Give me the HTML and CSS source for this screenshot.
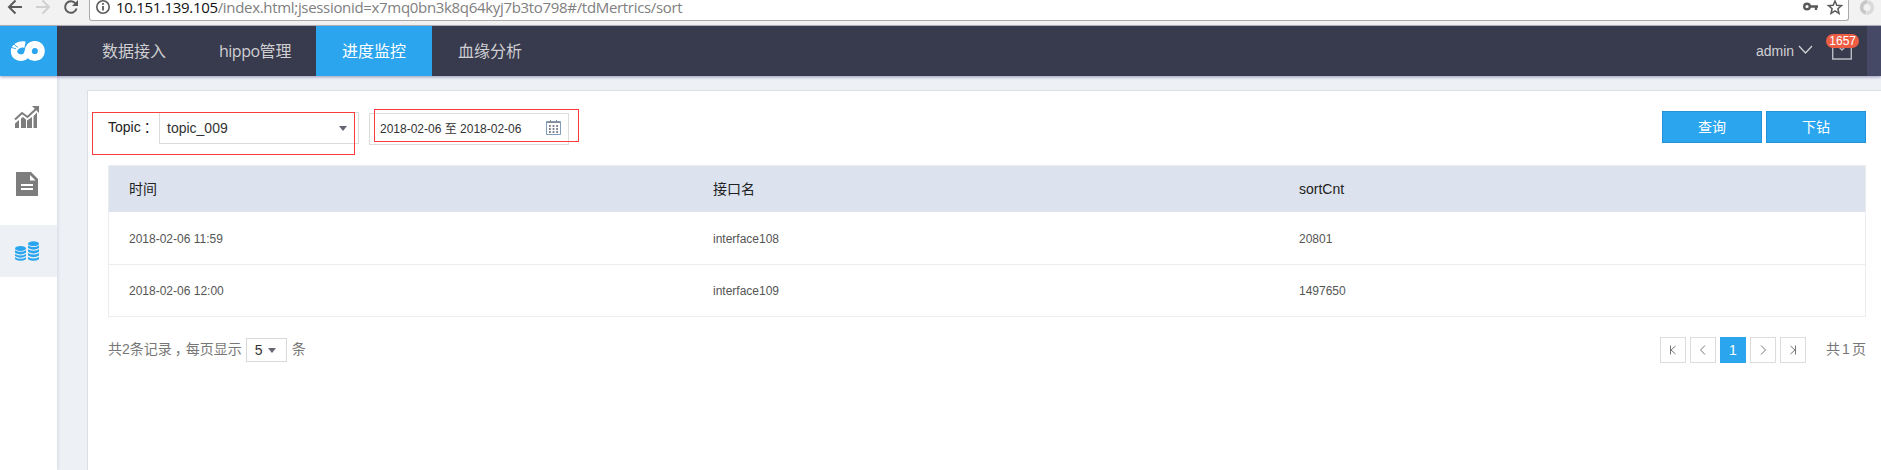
FILE: index.html
```html
<!DOCTYPE html>
<html lang="zh-CN">
<head>
<meta charset="utf-8">
<title>进度监控</title>
<link rel="stylesheet" href="styles.css">
</head>
<body>
<div class="browser">
  <div class="browser-nav">
    <svg width="89" height="25" viewBox="0 0 89 25" fill="none" stroke="#5a5a5a" stroke-width="2">
      <path d="M22 7H9.500M15.500 0.500L9 7l6.500 6.500"/>
      <path d="M36 7h12.500M42.500 0.500L49 7l-6.500 6.500" stroke="#d0d0d0"/>
      <path d="M75.500 3.500A5.800 5.800 0 1 0 76.500 8.500"/>
      <path d="M78 0v6h-6z" fill="#5a5a5a" stroke="none"/>
    </svg>
  </div>
  <div class="address">
    <svg class="info" width="16" height="16" viewBox="0 0 16 16" fill="none" stroke="#5a5a5a"><circle cx="8" cy="8" r="6.200" stroke-width="1.600"/><path d="M8 7v4.500M8 4v1.800" stroke-width="1.800"/></svg>
    <span class="url"><b>10.151.139.105</b>/index.html;jsessionid=x7mq0bn3k8q64kyj7b3to798#/tdMertrics/sort</span>
    <svg class="tools" width="42" height="20" viewBox="0 0 42 20" fill="none" stroke="#5a5a5a">
      <circle cx="5" cy="6.500" r="2.800" stroke-width="2.400"/><path d="M8 6.500h8M14 6.500v3.500" stroke-width="2.400"/>
      <path d="M33 1l1.800 4.300 4.700.4-3.600 3 1.100 4.600-4-2.500-4 2.500 1.100-4.600-3.600-3 4.700-.4z" stroke-width="1.500"/>
    </svg>
  </div>
  <svg class="ext" width="16" height="16" viewBox="0 0 16 16" fill="none" stroke-width="3.600"><path d="M7 13C1 11 1 3 8.500 1.500" stroke="#c8c8c8"/><path d="M9 2c6 2 6 10-1.500 11.500" stroke="#dadada"/></svg>
</div>
<header class="header">
  <div class="logo">
    <svg width="36" height="21" viewBox="0 0 36 21" fill="none" stroke="#fff">
      <path d="M15 3.600C9 2.500 4 6 4 10.500c0 5 6.500 8 11 5 3-2 3-8.500 6-10.500" stroke-width="6.400"/>
      <circle cx="24.800" cy="10" r="6.600" stroke-width="7"/>
      <path d="M0 6l6 1.800M3 2.500l5 4" stroke="#2ba5ee" stroke-width=".9"/>
    </svg>
  </div>
  <nav class="nav"><a>数据接入</a><a><span class="latin">hippo</span>管理</a><a class="active">进度监控</a><a>血缘分析</a></nav>
  <div class="account">
    <span>admin</span>
    <svg class="chevron" width="16" height="10" viewBox="0 0 16 10" fill="none" stroke="#d0d0d5"><path d="M1 1l6.500 7L14 1" stroke-width="1.300"/></svg>
    <div class="mail">
      <svg width="20" height="20" viewBox="0 0 20 20" fill="none" stroke="#b9bac2" stroke-width="1.400"><path d="M.7.700h18.600v18.300H.700zM5 5l5 5 5-5"/></svg>
      <span class="badge">1657</span>
    </div>
  </div>
  <div class="edge"></div>
</header>
<div class="body">
  <aside class="sidebar">
    <a><svg width="26" height="24" viewBox="0 0 26 24" fill="#7d7d7d"><path d="M1 18.500l4-3.500v8H1zM7 13.500l2-1.500 3 2.500V23H7zM13 15.500l5-3.500v11h-5zM19.500 11L23 7.500V23h-3.500z"/><path d="M1 14.500l7-6.500 5.500 4L22 4" fill="none" stroke="#7d7d7d" stroke-width="2"/><path d="M18 1h7v7z"/></svg></a>
    <a><svg width="22" height="24" viewBox="0 0 22 24"><path d="M0 0h15l7 7v17H0z" fill="#7d7d7d"/><path d="M14 3v5.500h5.500z" fill="#fff"/><path d="M5 13h12M5 17h12" stroke="#fff" stroke-width="1.800"/></svg></a>
    <a class="active"><svg width="26" height="20" viewBox="0 0 26 20" fill="#2ba5ee"><ellipse cx="6.500" cy="7.500" rx="5.500" ry="2.400"/><path d="M1 9.300q5.500 3 11 0v2.500q-5.500 3.600-11 0zM1 13q5.500 3 11 0v2q-5.500 3.600-11 0zM1 16.200q5.500 3 11 0v2q-5.500 3.300-11 0z"/><ellipse cx="19.500" cy="2.700" rx="5.500" ry="2.400"/><path d="M14 4.500q5.500 3 11 0V7q-5.500 3.600-11 0zM14 8.300q5.500 3 11 0v2.500q-5.500 3.600-11 0zM14 12.100q5.500 3 11 0v2.400q-5.500 3.600-11 0zM14 16q5.500 3 11 0v2.200q-5.500 3.300-11 0z"/></svg></a>
  </aside>
  <main class="panel">
    <div class="filters">
      <label class="label">Topic<span class="colon">：</span></label>
      <div class="select"><span>topic_009</span><i class="caret"></i></div>
      <div class="date"><span>2018-02-06 至 2018-02-06</span>
        <svg width="15" height="15" viewBox="0 0 15 15" fill="none" stroke="#70788a"><path d="M.5 1.500h14v13H.500z" stroke="#7f9cb8"/><path d="M1 2.500h13M4.500 0v3M10.500 0v3" stroke="#8a8a92"/><path d="M3 6h9M3 9h9M3 12h9" stroke="#55586a" stroke-width="1.600" stroke-dasharray="1.800 1.800"/></svg>
      </div>
      <div class="actions"><button>查询</button><button>下钻</button></div>
      <div class="mark mark-topic"></div>
      <div class="mark mark-date"></div>
    </div>
    <div class="table">
      <div class="row head"><span>时间</span><span>接口名</span><span>sortCnt</span></div>
      <div class="row"><span>2018-02-06 11:59</span><span>interface108</span><span>20801</span></div>
      <div class="row last"><span>2018-02-06 12:00</span><span>interface109</span><span>1497650</span></div>
    </div>
    <div class="footer">
      <span class="count">共2条记录<span class="comma">，</span>每页显示</span>
      <div class="size"><span>5</span><i class="caret"></i></div>
      <span class="count">条</span>
      <div class="pager">
        <a><svg width="10" height="10" viewBox="0 0 10 10"><path d="M2.500 .5v9M7.500 1L3 5l4.500 4"/></svg></a>
        <a><svg width="10" height="10" viewBox="0 0 10 10"><path d="M7 .5L2.500 5 7 9.500"/></svg></a>
        <a class="current">1</a>
        <a><svg width="10" height="10" viewBox="0 0 10 10"><path d="M3 .5L7.500 5 3 9.500"/></svg></a>
        <a><svg width="10" height="10" viewBox="0 0 10 10"><path d="M7.500 .5v9M2.500 1L7 5 2.500 9"/></svg></a>
      </div>
      <div class="total count"><span>共</span><span>1</span><span>页</span></div>
    </div>
  </main>
</div>
</body>
</html>
```
FILE: styles.css
```css
* { box-sizing: border-box; }
body {
  margin: 0;
  height: 470px;
  overflow: hidden;
  display: flex;
  flex-direction: column;
  background: #edf1f6;
  font-family: "Liberation Sans", "Noto Sans CJK SC", sans-serif;
  font-size: 14px;
  color: #333;
}
svg { display: block; flex: none; }

.browser {
  height: 26px;
  flex: none;
  display: flex;
  align-items: flex-start;
  background: #f2f2f2;
  border-bottom: 1px solid #b8b8bc;
}
.browser-nav { width: 89px; }
.address {
  width: 1760px;
  height: 21px;
  display: flex;
  background: #fff;
  border: 1px solid #a9a9a9;
  border-top: 0;
  border-radius: 0 0 3px 3px;
}
.info { margin: -1px 5px 0 5px; }
.url {
  flex: 1;
  font: 15px/15px "Open Sans", "Noto Sans", sans-serif;
  letter-spacing: -.32px;
  color: #808080;
  white-space: nowrap;
}
.url b { font-weight: 400; color: #111; }
.tools { margin-right: 4px; }
.ext { margin-left: 10px; }

.header {
  position: relative;
  height: 50px;
  flex: none;
  display: flex;
  background: #383a4d;
  box-shadow: 0 1px 3px rgba(70, 60, 130, .5);
}
.logo {
  width: 57px;
  padding: 15px 0 0 10px;
  background: #2ba5ee;
}
.nav { display: flex; margin-left: 19px; }
.nav a {
  width: 116px;
  padding-left: 26px;
  font: 16px/50px "Open Sans", "Noto Sans CJK SC", sans-serif;
  color: #cfcfd2;
  white-space: nowrap;
}
.nav a:nth-child(2) { width: 124px; padding-left: 27px; }
.latin { letter-spacing: -.5px; }
.nav .active { background: #2ba5ee; color: #fff; }
.account {
  margin-left: auto;
  display: flex;
  width: 111px;
  line-height: 51px;
  color: #d0d0d5;
}
.chevron { margin: 19px 0 0 4px; }
.mail { position: relative; margin: 14px 0 0 18px; }
.badge {
  position: absolute;
  left: -6px;
  top: -6px;
  width: 33px;
  height: 14px;
  border-radius: 7px;
  background: #ed5d44;
  color: #fff;
  font-size: 12px;
  line-height: 14px;
  text-align: center;
}
.edge { width: 14px; background: #464966; }

.body { flex: 1; display: flex; min-height: 0; }
.sidebar {
  width: 57px;
  flex: none;
  padding-top: 15px;
  display: flex;
  flex-direction: column;
  gap: 15px;
  background: #fff;
  box-shadow: 1px 0 3px rgba(60, 70, 100, .13);
}
.sidebar a {
  height: 52px;
  display: flex;
  align-items: center;
  justify-content: center;
  padding-right: 3px;
}
.sidebar .active { background: #edf1f6; }

.panel {
  flex: 1;
  margin: 14px 0 0 30px;
  padding: 20px 15px 0 20px;
  background: #fff;
  border: 1px solid #dedfe5;
  border-width: 1px 0 0 1px;
}
.filters {
  position: relative;
  height: 54px;
  display: flex;
  align-items: flex-start;
}
.label { width: 51px; line-height: 33px; color: #222; white-space: nowrap; }
.colon { margin-left: 3px; }
.select, .date {
  width: 200px;
  height: 32px;
  display: flex;
  align-items: center;
  justify-content: space-between;
  border: 1px solid #dcdcdc;
}
.select { margin-top: 1px; padding: 0 11px 0 7px; }
.date { margin: 2px 0 0 10px; padding: 0 7px 3px 10px; font-size: 12px; }
.date svg { margin-bottom: 1px; }
.caret {
  border: 4px solid transparent;
  border-top: 5px solid #666672;
  border-bottom: 0;
}
.actions { margin-left: auto; display: flex; gap: 4px; }
.actions button {
  width: 100px;
  height: 32px;
  padding: 0 0 2px;
  border: 1px solid #2592d6;
  background: #2ba5ee;
  color: #fff;
  font: 14px "Noto Sans CJK SC", sans-serif;
}
.mark { position: absolute; border: 1px solid #f83c3c; }
.mark-topic { left: -16px; top: 1px; width: 263px; height: 43px; }
.mark-date { left: 266px; top: -2px; width: 205px; height: 33px; }

.table { border: 1px solid #ebecee; border-bottom: 0; }
.row {
  display: grid;
  grid-template-columns: 584px 586px 1fr;
  height: 53px;
  line-height: 54px;
  padding-left: 20px;
  border-bottom: 1px solid #ebecee;
  font-size: 12px;
  color: #555;
}
.row.head {
  height: 46px;
  line-height: 46px;
  font-size: 14px;
  color: #222;
  background: #dce3ee;
  border: 0;
}
.row.last { height: 52px; line-height: 52px; }

.footer {
  margin-top: 20px;
  height: 26px;
  display: flex;
  align-items: center;
  color: #777;
  line-height: 26px;
}
.count { padding-bottom: 2px; }
.comma { display: inline-block; width: 14px; text-indent: 3px; }
.size {
  width: 41px;
  height: 24px;
  margin: 0 5px 0 4px;
  padding-left: 8px;
  display: flex;
  align-items: center;
  gap: 5px;
  border: 1px solid #d8d8d8;
  color: #333;
}
.pager { margin-left: auto; display: flex; gap: 4px; }
.pager a {
  width: 26px;
  height: 26px;
  display: flex;
  align-items: center;
  justify-content: center;
  border: 1px solid #dcdcdc;
}
.pager svg { fill: none; stroke: #777; }
.pager .current { background: #2ba5ee; border-color: #2ba5ee; color: #fff; }
.total { width: 40px; margin-left: 20px; display: flex; justify-content: space-between; }
```
